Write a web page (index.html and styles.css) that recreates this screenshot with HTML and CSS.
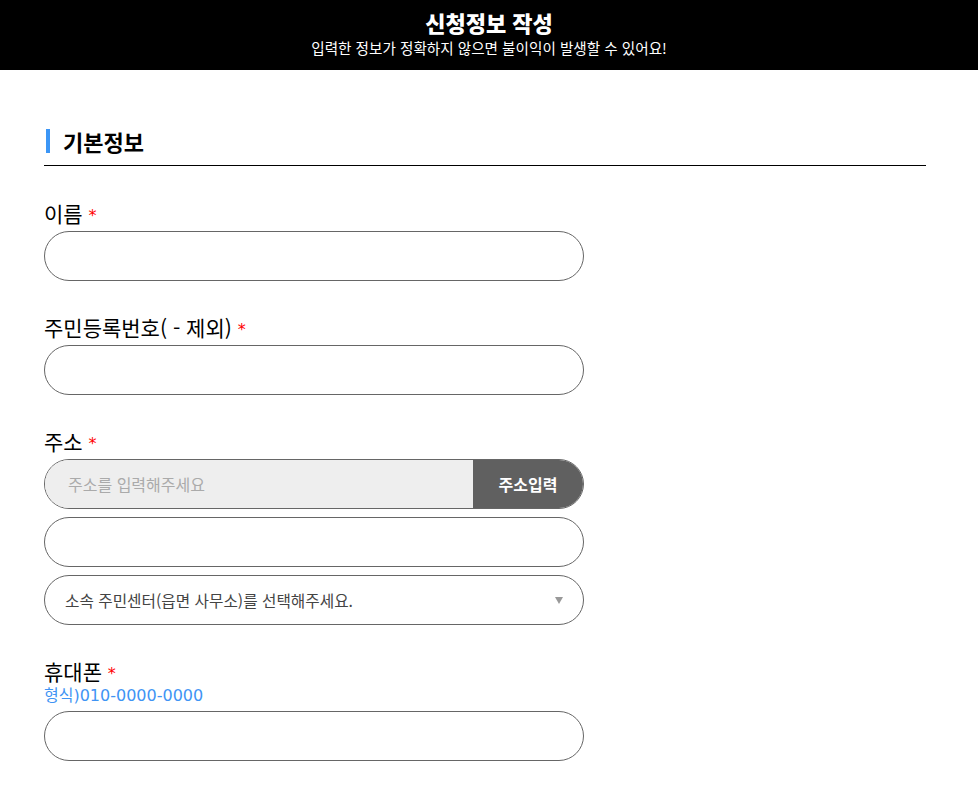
FILE: index.html
```html
<!DOCTYPE html>
<html lang="ko">
<head>
    <meta charset="UTF-8">
    <meta name="viewport" content="width=device-width, initial-scale=1.0">
    <title>신청정보 작성</title>
    <link rel="stylesheet" href="styles.css">
</head>
<body>

    <header class="page-header">
        <h1 class="page-title">신청정보 작성</h1>
        <p class="page-desc">입력한 정보가 정확하지 않으면 불이익이 발생할 수 있어요!</p>
    </header>

    <main class="form-wrap">
        <h2 class="section-title"><span class="bar"></span>기본정보</h2>

        <div class="field">
            <label class="field-label" for="name">이름 <span class="req">*</span></label>
            <input class="text-input" type="text" id="name">
        </div>

        <div class="field">
            <label class="field-label" for="rrn">주민등록번호( - 제외) <span class="req">*</span></label>
            <input class="text-input" type="text" id="rrn">
        </div>

        <div class="field">
            <label class="field-label" for="addr">주소 <span class="req">*</span></label>
            <div class="addr-group">
                <input class="addr-input" type="text" id="addr" placeholder="주소를 입력해주세요" readonly>
                <button class="addr-btn" type="button">주소입력</button>
            </div>
            <input class="text-input stack" type="text">
            <div class="select-box stack">
                <select class="select-input">
                    <option>소속 주민센터(읍면 사무소)를 선택해주세요.</option>
                </select>
            </div>
        </div>

        <div class="field">
            <label class="field-label" for="phone">휴대폰 <span class="req">*</span></label>
            <p class="hint">형식)010-0000-0000</p>
            <input class="text-input" type="text" id="phone">
        </div>
    </main>

</body>
</html>
```

FILE: styles.css
```css
* {
    box-sizing: border-box;
}

body {
    margin: 0;
    font-family: "Noto Sans CJK KR", "Noto Sans", sans-serif;
    color: #000;
    background-color: #fff;
}

.page-header {
    background-color: #000;
    color: #fff;
    text-align: center;
    padding: 7px 0 12px;
}

.page-title {
    margin: 0;
    font-size: 22px;
    font-weight: 900;
    line-height: 30px;
}

.page-desc {
    margin: 1px 0 0;
    font-size: 14.6px;
    line-height: 20px;
}

.form-wrap {
    width: 882px;
    margin-left: 44px;
    padding-top: 57px;
}

.section-title {
    display: flex;
    align-items: center;
    margin: 0;
    padding-bottom: 10px;
    border-bottom: 1px solid #000;
    font-size: 22px;
    font-weight: 700;
    line-height: 28px;
}

.section-title .bar {
    width: 4px;
    height: 24px;
    margin: 0 13px 0 2px;
    background-color: #3c96f6;
}

.field {
    margin-top: 33px;
}

.field + .field {
    margin-top: 32px;
}

.field-label {
    display: block;
    height: 28px;
    font-family: "Noto Sans CJK KR", "DejaVu Sans", sans-serif;
    font-size: 21px;
    line-height: 28px;
    margin-bottom: 4px;
}

.req {
    color: #f00;
    font-family: "DejaVu Sans", sans-serif;
    font-size: 16px;
    line-height: 0;
    vertical-align: 1px;
}

.hint {
    margin: -4px 0 4px;
    color: #3f94f4;
    font-family: "DejaVu Sans", "Noto Sans CJK KR", sans-serif;
    font-size: 16px;
    line-height: 22px;
}

.text-input,
.addr-group,
.select-box {
    display: block;
    width: 540px;
    height: 50px;
    border: 1px solid #666;
    border-radius: 25px;
    background-color: #fff;
}

.text-input {
    padding: 0 20px;
    font-family: inherit;
    font-size: 16px;
    outline: none;
}

.stack {
    margin-top: 8px;
}

.addr-group {
    display: flex;
    overflow: hidden;
}

.addr-input {
    flex: 1;
    min-width: 0;
    border: 0;
    padding: 0 23px;
    background-color: #eee;
    font-family: inherit;
    font-size: 16px;
    outline: none;
}

.addr-input::placeholder {
    color: #aaa;
}

.addr-btn {
    width: 110px;
    border: 0;
    background-color: #606060;
    color: #fff;
    font-family: inherit;
    font-size: 16px;
    font-weight: 700;
    cursor: pointer;
}

.select-box {
    position: relative;
}

.select-box::after {
    content: "";
    position: absolute;
    right: 20px;
    top: 21px;
    border-left: 4px solid transparent;
    border-right: 4px solid transparent;
    border-top: 7px solid #999;
    pointer-events: none;
}

.select-input {
    width: 100%;
    height: 100%;
    border: 0;
    border-radius: 25px;
    padding: 0 20px;
    background: transparent;
    color: #444;
    font-family: inherit;
    font-size: 15.7px;
    -webkit-appearance: none;
    appearance: none;
    outline: none;
}
```
